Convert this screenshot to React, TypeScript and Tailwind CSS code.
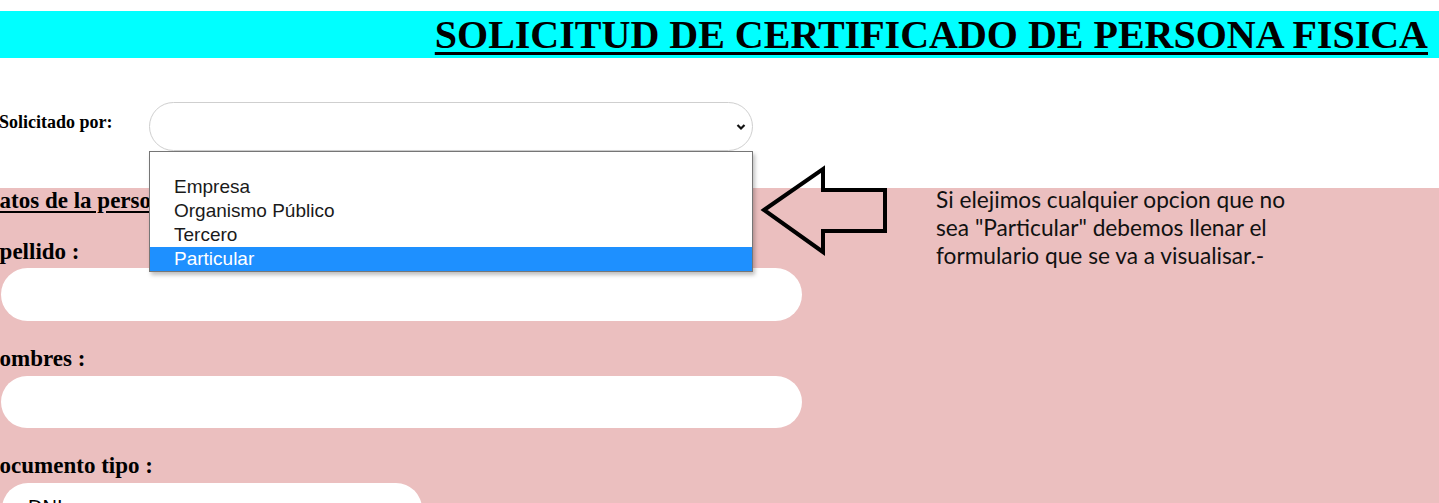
import React from 'react';

const Label: React.FC<{ text: string; className?: string }> = ({ text, className = '' }) => (
  <p className={`text-[23px] leading-[26px] font-bold text-black font-['Liberation_Serif',serif] ${className}`}>{text}</p>
);

const App: React.FC = () => {
  return (
    <div className="relative w-[1439px] h-[503px] overflow-hidden bg-white font-['Liberation_Sans',Arial,sans-serif]">
      {/* header */}
      <div className="mt-[11px] h-[47px] bg-[#00ffff] flex items-center justify-end pr-[11px]">
        <h1 className="text-[40px] leading-[44px] font-bold text-black underline decoration-[3px] underline-offset-[4px] font-['Liberation_Serif',serif]">
          SOLICITUD DE CERTIFICADO DE PERSONA FISICA
        </h1>
      </div>

      {/* solicitado por */}
      <div className="mt-[44px] flex items-center -ml-[1px]">
        <span className="w-[150px] text-[18px] font-bold font-['Liberation_Serif',serif] -mt-[8px]">Solicitado por:</span>
        <div className="w-[604px] h-[49px] rounded-full border border-[#cfcfcf] bg-white flex items-center justify-end pr-[6px]">
          <svg width="10" height="8" viewBox="0 0 10 8">
            <path d="M1.5 2 L5 5.5 L8.5 2" fill="none" stroke="#111" strokeWidth="2.2" />
          </svg>
        </div>
      </div>

      {/* pink section */}
      <div className="mt-[37px] bg-[#ebbfbf] flex h-[400px]">
        <div className="-ml-[17px] w-[822px]">
          <Label text="Datos de la persona" className="underline underline-offset-[3px] decoration-[2px]" />
          <Label text="Apellido :" className="mt-[25px]" />
          <div className="mt-[3px] ml-[18px] w-[801px] h-[53px] rounded-full bg-white" />
          <Label text="Nombres :" className="mt-[25px]" />
          <div className="mt-[4px] ml-[18px] w-[801px] h-[52px] rounded-full bg-white" />
          <Label text="Documento tipo :" className="mt-[25px]" />
          <div className="mt-[4px] ml-[19px] w-[420px] h-[52px] rounded-[26px] bg-white pl-[26px] pt-[12px] text-[20px] leading-[24px]">
            DNI
          </div>
        </div>
        <div className="ml-[131px] -mt-[2px] text-[22.7px] leading-[28px] text-[#111] font-['Lato',sans-serif]">
          <p>Si elejimos cualquier opcion que no</p>
          <p>sea "Particular" debemos llenar el</p>
          <p>formulario que se va a visualisar.-</p>
        </div>
      </div>

      {/* open dropdown list */}
      <div className="absolute left-[149px] top-[151px] w-[604px] border border-[#767676] bg-white shadow-[2px_3px_4px_rgba(0,0,0,0.25)] text-[19px] leading-[24px] text-[#1a1a1a]">
        <div className="h-[23px]" />
        <div className="pl-[24px]">Empresa</div>
        <div className="pl-[24px]">Organismo Público</div>
        <div className="pl-[24px]">Tercero</div>
        <div className="pl-[24px] bg-[#1e90ff] text-white">Particular</div>
      </div>

      {/* arrow */}
      <svg className="absolute left-[755px] top-[160px]" width="140" height="100" viewBox="755 160 140 100">
        <path
          d="M764 210 L823 169 L823 190 L885 190 L885 231 L823 231 L823 252 Z"
          fill="none"
          stroke="#000"
          strokeWidth="4"
          strokeLinejoin="miter"
        />
      </svg>
    </div>
  );
};

export default App;
